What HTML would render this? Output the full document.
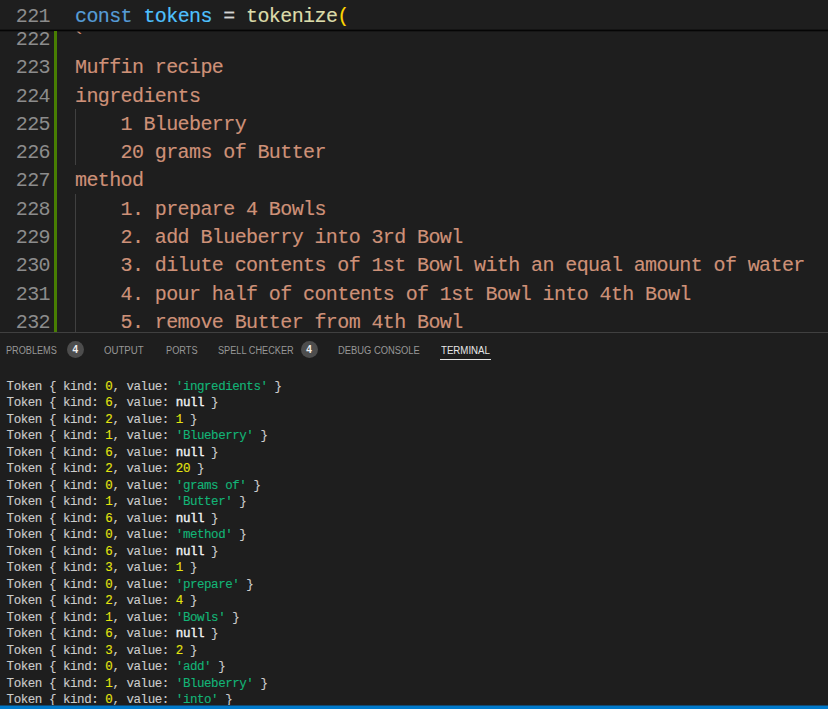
<!DOCTYPE html>
<html><head><meta charset="utf-8">
<style>
*{margin:0;padding:0;box-sizing:border-box}
html,body{width:828px;height:709px;overflow:hidden;background:#1e1e1e}
body{position:relative;font-family:"Liberation Mono",monospace}
.ed{position:absolute;left:0;top:0;width:828px;height:332px;background:#1e1e1e;overflow:hidden}
.ln{position:absolute;left:0;width:50px;text-align:right;color:#8c8c8c;font-size:20px;letter-spacing:-0.58px;line-height:28.3px;height:28.3px;white-space:pre}
.tx{position:absolute;left:75px;color:#ce9178;-webkit-text-stroke:0.15px currentColor;font-size:20px;letter-spacing:-0.6px;line-height:28.3px;height:28.3px;white-space:pre}
.gbar{position:absolute;left:54px;top:31px;width:3px;height:301px;background:#487e02;z-index:5}
.guide{position:absolute;left:75px;width:1px;background:#404040}
.sticky{position:absolute;left:0;top:0;width:828px;height:29.3px;background:#1e1e1e}
.shadow{position:absolute;left:0;top:29px;width:828px;height:3px;background:linear-gradient(#141414 0px,#141414 1px,#050505 1px,#050505 2px,rgba(8,8,8,0.35) 2px,rgba(8,8,8,0.35) 3px)}
.kw{color:#569cd6}.var{color:#4fc1ff}.op{color:#d4d4d4}.fn{color:#dcdcaa}.br{color:#ffd700}
.panel{position:absolute;left:0;top:332px;width:828px;height:373px;background:#1e1e1e;border-top:1px solid #404040}
.tab{position:absolute;top:11.5px;font-family:"Liberation Sans",sans-serif;font-size:10px;color:#979797;white-space:pre;line-height:12px;transform-origin:0 50%}
.tab.act{color:#e7e7e7}
.badge{position:absolute;top:8px;width:17px;height:17px;border-radius:50%;background:#4d4d4d;color:#f0f0f0;font-family:"Liberation Sans",sans-serif;font-size:10px;font-weight:bold;line-height:18px;text-align:center}
.uline{position:absolute;left:440px;top:26px;width:51px;height:1px;background:#e7e7e7}
.term{position:absolute;left:6.6px;top:45.8px;font-size:12.5px;letter-spacing:-0.45px;line-height:16.48px;color:#cccccc;white-space:pre;-webkit-text-stroke:0.12px currentColor}
.y{color:#e5e510}.g{color:#13b577}.b{color:#f2f2f2;-webkit-text-stroke:0.35px #f2f2f2}
.status{position:absolute;left:0;top:706px;width:828px;height:3px;background:#007acc}.status0{position:absolute;left:0;top:705px;width:828px;height:1px;background:#0f4a73}
</style></head><body>
<div class="ed">
  <div class="gbar"></div>
  <div class="guide" style="top:109px;height:56px"></div>
  <div class="guide" style="top:194px;height:138px"></div>
  <div class="ln" style="top:25.9px">222</div><div class="tx" style="top:25.9px"><span style="position:relative;left:-2px;top:1px">`</span></div>
  <div class="ln" style="top:54.2px">223</div><div class="tx" style="top:54.2px">Muffin recipe</div>
  <div class="ln" style="top:82.5px">224</div><div class="tx" style="top:82.5px">ingredients</div>
  <div class="ln" style="top:110.8px">225</div><div class="tx" style="top:110.8px">    1 Blueberry</div>
  <div class="ln" style="top:139.1px">226</div><div class="tx" style="top:139.1px">    20 grams of Butter</div>
  <div class="ln" style="top:167.4px">227</div><div class="tx" style="top:167.4px">method</div>
  <div class="ln" style="top:195.7px">228</div><div class="tx" style="top:195.7px">    1. prepare 4 Bowls</div>
  <div class="ln" style="top:224px">229</div><div class="tx" style="top:224px">    2. add Blueberry into 3rd Bowl</div>
  <div class="ln" style="top:252.3px">230</div><div class="tx" style="top:252.3px">    3. dilute contents of 1st Bowl with an equal amount of water</div>
  <div class="ln" style="top:280.6px">231</div><div class="tx" style="top:280.6px">    4. pour half of contents of 1st Bowl into 4th Bowl</div>
  <div class="ln" style="top:308.9px">232</div><div class="tx" style="top:308.9px">    5. remove Butter from 4th Bowl</div>
  <div class="sticky">
    <div class="ln" style="top:2.7px">221</div><div class="tx" style="top:2.7px"><span class="kw">const</span> <span class="var">tokens</span> <span class="op">=</span> <span class="fn">tokenize</span><span class="br">(</span></div>
  </div>
  <div class="shadow"></div>
</div>
<div class="panel">
  <div class="tab" style="left:6px;transform:scaleX(0.915)">PROBLEMS</div><div class="badge" style="left:66.8px">4</div>
  <div class="tab" style="left:104px;transform:scaleX(0.965)">OUTPUT</div>
  <div class="tab" style="left:165.6px;transform:scaleX(0.92)">PORTS</div>
  <div class="tab" style="left:218.3px;transform:scaleX(0.918)">SPELL CHECKER</div><div class="badge" style="left:300.5px">4</div>
  <div class="tab" style="left:337.8px;transform:scaleX(0.938)">DEBUG CONSOLE</div>
  <div class="tab act" style="left:441.3px;transform:scaleX(0.968)">TERMINAL</div>
  <div class="uline"></div>
<div class="term">Token { kind: <span class="y">0</span>, value: <span class="g">'ingredients'</span> }
Token { kind: <span class="y">6</span>, value: <span class="b">null</span> }
Token { kind: <span class="y">2</span>, value: <span class="y">1</span> }
Token { kind: <span class="y">1</span>, value: <span class="g">'Blueberry'</span> }
Token { kind: <span class="y">6</span>, value: <span class="b">null</span> }
Token { kind: <span class="y">2</span>, value: <span class="y">20</span> }
Token { kind: <span class="y">0</span>, value: <span class="g">'grams of'</span> }
Token { kind: <span class="y">1</span>, value: <span class="g">'Butter'</span> }
Token { kind: <span class="y">6</span>, value: <span class="b">null</span> }
Token { kind: <span class="y">0</span>, value: <span class="g">'method'</span> }
Token { kind: <span class="y">6</span>, value: <span class="b">null</span> }
Token { kind: <span class="y">3</span>, value: <span class="y">1</span> }
Token { kind: <span class="y">0</span>, value: <span class="g">'prepare'</span> }
Token { kind: <span class="y">2</span>, value: <span class="y">4</span> }
Token { kind: <span class="y">1</span>, value: <span class="g">'Bowls'</span> }
Token { kind: <span class="y">6</span>, value: <span class="b">null</span> }
Token { kind: <span class="y">3</span>, value: <span class="y">2</span> }
Token { kind: <span class="y">0</span>, value: <span class="g">'add'</span> }
Token { kind: <span class="y">1</span>, value: <span class="g">'Blueberry'</span> }
Token { kind: <span class="y">0</span>, value: <span class="g">'into'</span> }</div>
</div>
<div class="status0"></div><div class="status"></div>
</body></html>
